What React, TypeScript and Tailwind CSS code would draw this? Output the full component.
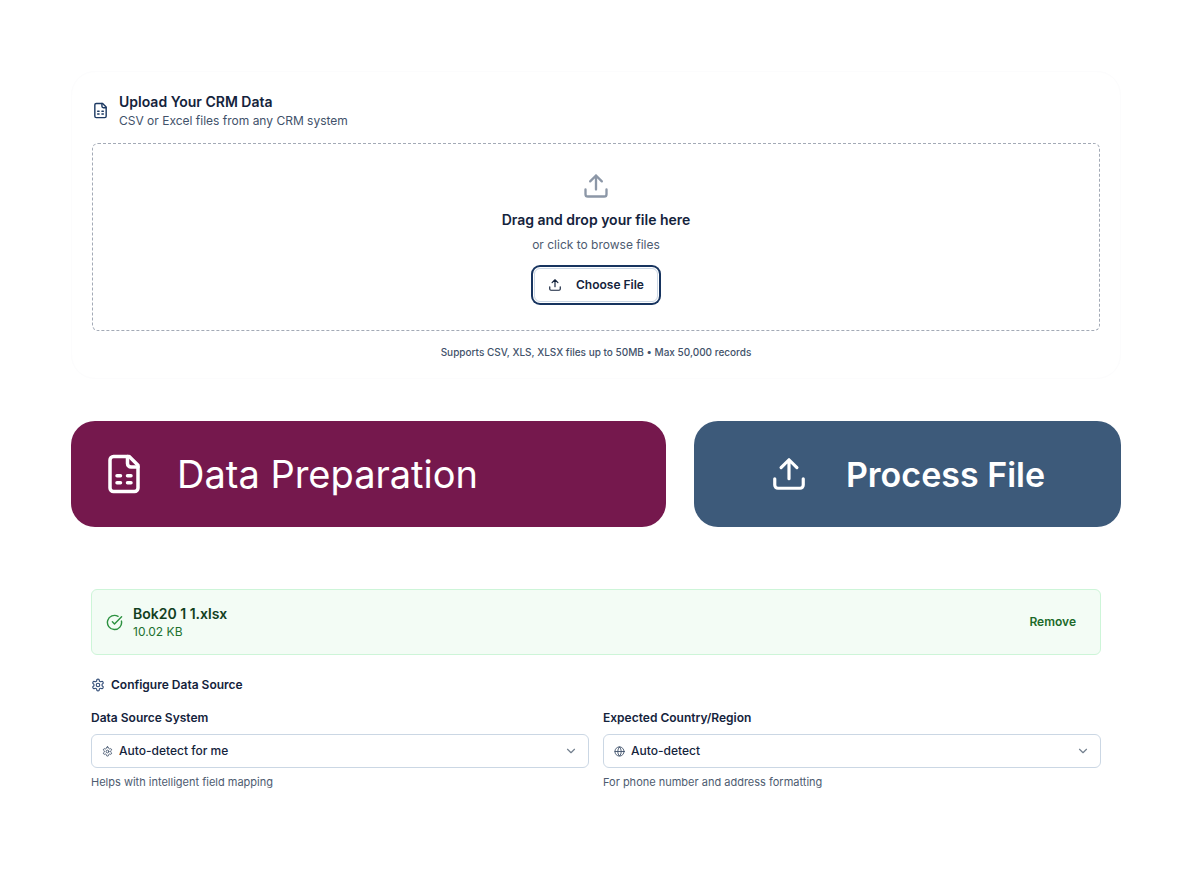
import { useRef } from "react";
import type { ReactNode } from "react";
import { ChevronDown, CircleCheckBig, Globe } from "lucide-react";

type IconProps = { className: string };

function SheetIcon({ className }: IconProps) {
  return (
    <svg viewBox="0 0 24 24" fill="none" stroke="currentColor" strokeWidth={2} strokeLinecap="round" strokeLinejoin="round" className={className} aria-hidden="true">
      <path d="M15 2H6a2 2 0 0 0-2 2v16a2 2 0 0 0 2 2h12a2 2 0 0 0 2-2V7Z" />
      <path d="M14 2v4a2 2 0 0 0 2 2h4" />
      <path d="M8 13h2M14 13h2M8 17h2M14 17h2" />
    </svg>
  );
}

function UploadIcon({ className }: IconProps) {
  return (
    <svg viewBox="0 0 24 24" fill="none" stroke="currentColor" strokeWidth={2} strokeLinecap="round" strokeLinejoin="round" className={className} aria-hidden="true">
      <path d="M21 15v4a2 2 0 0 1-2 2H5a2 2 0 0 1-2-2v-4" />
      <path d="m17 8-5-5-5 5M12 3v12" />
    </svg>
  );
}

function GearIcon({ className }: IconProps) {
  return (
    <svg viewBox="0 0 24 24" fill="none" stroke="currentColor" strokeWidth={2} strokeLinecap="round" strokeLinejoin="round" className={className} aria-hidden="true">
      <path d="M12.22 2h-.44a2 2 0 0 0-2 2v.18a2 2 0 0 1-1 1.73l-.43.25a2 2 0 0 1-2 0l-.15-.08a2 2 0 0 0-2.73.73l-.22.38a2 2 0 0 0 .73 2.73l.15.1a2 2 0 0 1 1 1.72v.51a2 2 0 0 1-1 1.74l-.15.09a2 2 0 0 0-.73 2.73l.22.38a2 2 0 0 0 2.73.73l.15-.08a2 2 0 0 1 2 0l.43.25a2 2 0 0 1 1 1.73V20a2 2 0 0 0 2 2h.44a2 2 0 0 0 2-2v-.18a2 2 0 0 1 1-1.73l.43-.25a2 2 0 0 1 2 0l.15.08a2 2 0 0 0 2.73-.73l.22-.39a2 2 0 0 0-.73-2.73l-.15-.08a2 2 0 0 1-1-1.74v-.5a2 2 0 0 1 1-1.74l.15-.09a2 2 0 0 0 .73-2.73l-.22-.38a2 2 0 0 0-2.73-.73l-.15.08a2 2 0 0 1-2 0l-.43-.25a2 2 0 0 1-1-1.73V4a2 2 0 0 0-2-2z" />
      <circle cx="12" cy="12" r="3" />
    </svg>
  );
}

type FieldProps = { id: string; label: string; value: string; hint: string; icon: ReactNode };

function SelectField({ id, label, value, hint, icon }: FieldProps) {
  return (
    <div className="min-w-0">
      <label htmlFor={id} className="block text-[12px] leading-5 font-semibold">
        {label}
      </label>
      <div className="relative mt-1.5">
        <span className="pointer-events-none absolute inset-y-0 left-[11px] flex items-center text-[#42536c]">{icon}</span>
        <select id={id} className="h-[34px] w-full appearance-none rounded-md border border-[#cbd7e4] bg-white pr-8 pl-[27px] text-[12px] font-medium text-[#14233c]">
          <option>{value}</option>
        </select>
        <ChevronDown className="pointer-events-none absolute top-2.5 right-[11px] size-3.5 text-[#74808f]" strokeWidth={2} />
      </div>
      <p className="mt-1.5 text-[11px] leading-4 text-[#4d5b70]">{hint}</p>
    </div>
  );
}

export default function App() {
  const fileInput = useRef<HTMLInputElement>(null);
  return (
    <main className="min-h-screen bg-white pt-[71px] pr-[78px] pb-20 pl-[71px] font-['Inter',sans-serif] text-[#14233c]">
      <section className="rounded-3xl border border-[#fcfcfd] px-5 pt-[19px] pb-[17px]">
        <header className="flex items-center gap-2.5">
          <SheetIcon className="size-[17px] text-[#1d3a63]" />
          <div>
            <h1 className="text-[14px] leading-[22px] font-semibold">Upload Your CRM Data</h1>
            <p className="text-[12px] leading-4 text-[#42526a]">CSV or Excel files from any CRM system</p>
          </div>
        </header>
        <div className="mt-3.5 flex flex-col items-center rounded-md border border-dashed border-[#a3aab6] py-7">
          <UploadIcon className="size-7 text-[#8c97a7]" />
          <h2 className="mt-2.5 text-[14px] leading-5 font-semibold">Drag and drop your file here</h2>
          <p className="mt-[5px] text-[12px] leading-5 text-[#4d5b70]">or click to browse files</p>
          <input ref={fileInput} type="file" accept=".csv,.xls,.xlsx" aria-label="CRM data file" className="hidden" />
          <button
            type="button"
            onClick={() => fileInput.current?.click()}
            className="mt-[13px] flex h-[34px] items-center gap-3.5 rounded-md border border-[#cbd7e4] bg-white px-[13px] text-[12px] font-semibold ring-2 ring-[#17345f] ring-offset-1"
          >
            <UploadIcon className="size-3.5" />
            Choose File
          </button>
        </div>
        <p className="mt-3 text-center text-[10px] leading-[18px] font-medium text-[#42526a]">
          Supports CSV, XLS, XLSX files up to 50MB • Max 50,000 records
        </p>
      </section>

      <div className="mt-[42px] grid grid-cols-[595fr_427fr] gap-7">
        <div className="flex h-[106px] items-center gap-8 rounded-3xl bg-[#75184d] pl-8 text-white">
          <SheetIcon className="size-[42px] shrink-0" />
          <h2 className="text-[38px] leading-none font-normal whitespace-nowrap">Data Preparation</h2>
        </div>
        <button type="button" className="flex h-[106px] items-center justify-center gap-[38px] rounded-3xl bg-[#3d5a7a] text-[34px] font-semibold whitespace-nowrap text-white">
          <UploadIcon className="size-[38px] shrink-0" />
          Process File
        </button>
      </div>

      <section className="mt-[62px] px-5">
        <div className="flex items-center rounded-md border border-[#cdf5d8] bg-[#f3fcf5] p-3.5">
          <CircleCheckBig className="size-[17px] text-[#2c9140]" strokeWidth={2} />
          <div className="ml-2.5">
            <p className="text-[14px] leading-5 font-semibold text-[#12401f]">Bok20 1 1.xlsx</p>
            <p className="text-[12px] leading-4 text-[#20702f]">10.02 KB</p>
          </div>
          <button type="button" className="mr-2.5 ml-auto text-[12px] leading-5 font-semibold text-[#1c6a2a]">
            Remove
          </button>
        </div>
        <h2 className="mt-5 flex items-center gap-1.5 text-[12px] leading-5 font-semibold">
          <GearIcon className="size-3.5 text-[#36507a]" />
          Configure Data Source
        </h2>
        <div className="mt-[13px] grid grid-cols-2 gap-3.5">
          <SelectField id="source-system" label="Data Source System" value="Auto-detect for me" hint="Helps with intelligent field mapping" icon={<GearIcon className="size-[11px]" />} />
          <SelectField id="country-region" label="Expected Country/Region" value="Auto-detect" hint="For phone number and address formatting" icon={<Globe className="size-[11px]" />} />
        </div>
      </section>
    </main>
  );
}
